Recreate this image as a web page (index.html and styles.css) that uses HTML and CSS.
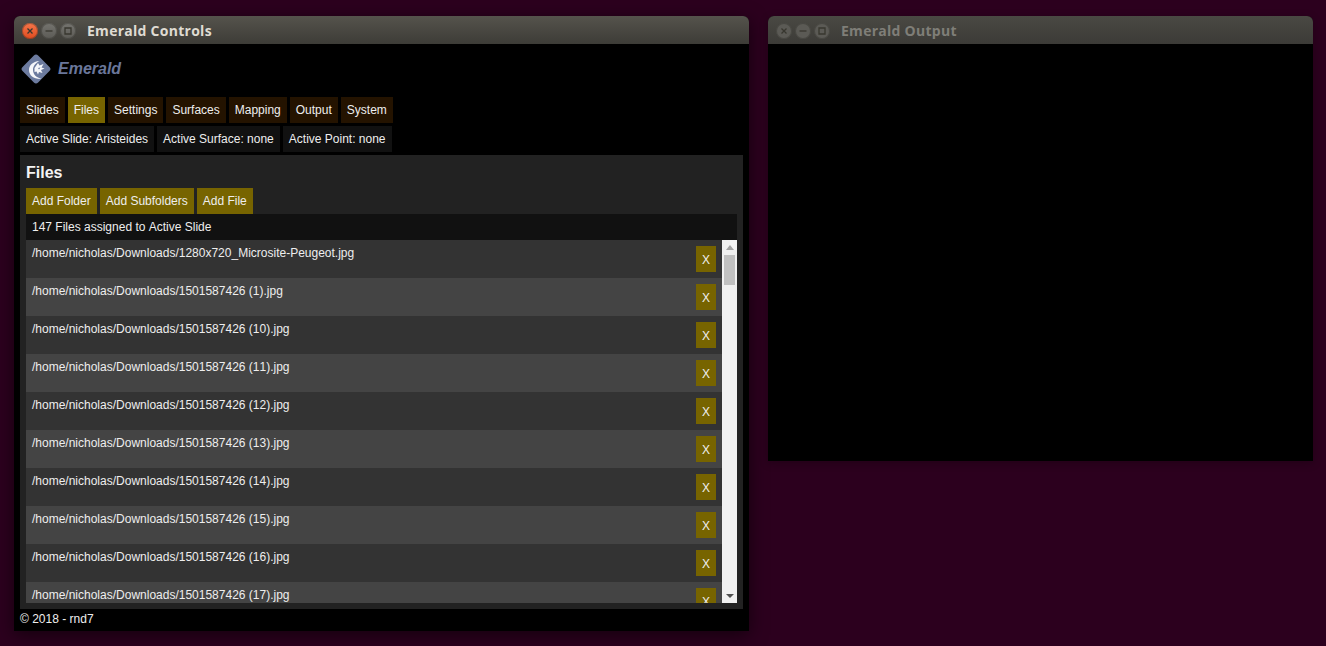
FILE: index.html
```html
<!DOCTYPE html>
<html lang="en">
<head>
<meta charset="utf-8">
<title>Emerald</title>
<link rel="stylesheet" href="styles.css">
</head>
<body>
<section class="window window-controls">
  <header class="titlebar">
    <div class="wm-buttons">
      <span class="wm wm-close"><svg viewBox="0 0 16 16"><path d="M5.5 5.5l5 5M10.5 5.5l-5 5"/></svg></span>
      <span class="wm"><svg viewBox="0 0 16 16"><path d="M4.5 8h7"/></svg></span>
      <span class="wm"><svg viewBox="0 0 16 16"><path d="M5 5h6v6H5z"/></svg></span>
    </div>
    <h1 class="wm-title">Emerald Controls</h1>
  </header>
  <div class="app">
    <div class="brand">
      <svg class="logo" viewBox="0 0 30 30">
        <rect x="4" y="4" width="22" height="22" rx="3" transform="rotate(45 15 15)" fill="#6c7b9f"/>
        <path d="M18.500 7C11.500 7.500 8 11.500 8 16c0 5.500 5 9.500 12.500 9-5-1.500-8.500-4.500-8.500-9 0-4 2.500-7 6.500-9z" fill="#f6f7fa"/>
        <path d="M13.500 14l3.500-5 1.500 2.500 4-1.500-2 3.500 3 1-3.500 1.500 1.500 3-3.500-1-1 2.500-1.500-3-2 .5z" fill="#f6f7fa"/>
        <path d="M17 14l2.500-.5-1.500 2z" fill="#6c7b9f"/>
      </svg>
      <span class="brand-name">Emerald</span>
    </div>
    <nav class="tabs">
      <a class="tab">Slides</a><a class="tab tab-active">Files</a><a class="tab">Settings</a><a class="tab">Surfaces</a><a class="tab">Mapping</a><a class="tab">Output</a><a class="tab">System</a>
    </nav>
    <div class="status">
      <span class="status-item">Active Slide: Aristeides</span><span class="status-item">Active Surface: none</span><span class="status-item">Active Point: none</span>
    </div>
    <main class="panel">
      <h2 class="panel-title">Files</h2>
      <div class="actions">
        <button class="btn">Add Folder</button><button class="btn">Add Subfolders</button><button class="btn">Add File</button>
      </div>
      <div class="count">147 Files assigned to Active Slide</div>
      <div class="list-wrap">
        <ul class="file-list">
          <li class="file"><span>/home/nicholas/Downloads/1280x720_Microsite-Peugeot.jpg</span><button class="btn btn-x">X</button></li>
          <li class="file"><span>/home/nicholas/Downloads/1501587426 (1).jpg</span><button class="btn btn-x">X</button></li>
          <li class="file"><span>/home/nicholas/Downloads/1501587426 (10).jpg</span><button class="btn btn-x">X</button></li>
          <li class="file"><span>/home/nicholas/Downloads/1501587426 (11).jpg</span><button class="btn btn-x">X</button></li>
          <li class="file"><span>/home/nicholas/Downloads/1501587426 (12).jpg</span><button class="btn btn-x">X</button></li>
          <li class="file"><span>/home/nicholas/Downloads/1501587426 (13).jpg</span><button class="btn btn-x">X</button></li>
          <li class="file"><span>/home/nicholas/Downloads/1501587426 (14).jpg</span><button class="btn btn-x">X</button></li>
          <li class="file"><span>/home/nicholas/Downloads/1501587426 (15).jpg</span><button class="btn btn-x">X</button></li>
          <li class="file"><span>/home/nicholas/Downloads/1501587426 (16).jpg</span><button class="btn btn-x">X</button></li>
          <li class="file"><span>/home/nicholas/Downloads/1501587426 (17).jpg</span><button class="btn btn-x">X</button></li>
        </ul>
        <div class="scrollbar">
          <span class="arrow arrow-up"></span>
          <span class="thumb"></span>
          <span class="arrow arrow-down"></span>
        </div>
      </div>
    </main>
    <footer class="footer">© 2018 - rnd7</footer>
  </div>
</section>
<section class="window window-output">
  <header class="titlebar titlebar-dim">
    <div class="wm-buttons">
      <span class="wm"><svg viewBox="0 0 16 16"><path d="M5.5 5.5l5 5M10.5 5.5l-5 5"/></svg></span>
      <span class="wm"><svg viewBox="0 0 16 16"><path d="M4.5 8h7"/></svg></span>
      <span class="wm"><svg viewBox="0 0 16 16"><path d="M5 5h6v6H5z"/></svg></span>
    </div>
    <h1 class="wm-title">Emerald Output</h1>
  </header>
  <div class="output-canvas"></div>
</section>
</body>
</html>
```
FILE: styles.css
```css
* { box-sizing: border-box; }
html, body { height: 100%; margin: 0; }
body {
  background: #2c001e;
  font-family: "Liberation Sans", Arial, sans-serif;
  font-size: 12px;
  line-height: 14px;
  font-kerning: none;
  color: #eee;
  overflow: hidden;
  position: relative;
}
.window {
  position: absolute;
  top: 16px;
  display: flex;
  flex-direction: column;
  background: #000;
  border-radius: 6px 6px 0 0;
}
.window-controls {
  left: 14px;
  width: 735px;
  height: 615px;
  box-shadow: 0 4px 18px rgba(0, 0, 0, .55);
}
.window-output {
  left: 768px;
  width: 545px;
  height: 445px;
  box-shadow: 0 2px 8px rgba(0, 0, 0, .25);
}
.titlebar {
  flex: none;
  height: 28px;
  display: flex;
  align-items: center;
  padding: 1px 0 0 8px;
  border-radius: 6px 6px 0 0;
  background: linear-gradient(#55534c, #3d3c37);
}
.titlebar-dim { background: linear-gradient(#4a4943, #3c3b37); }
.wm-buttons { display: flex; gap: 3px; }
.wm {
  width: 16px;
  height: 16px;
  border-radius: 50%;
  background: linear-gradient(#75746f, #5b5a55);
  box-shadow: inset 0 0 0 1px rgba(40, 40, 35, .35);
  display: block;
}
.wm svg { display: block; width: 16px; height: 16px; fill: none; stroke: #38372f; stroke-width: 1.3; }
.wm-close { background: linear-gradient(#f5764a, #df4b1f); }
.wm-title {
  margin: 0 0 0 11px;
  font-family: "Open Sans", "Noto Sans", sans-serif;
  font-size: 14px;
  font-weight: 700;
  letter-spacing: .27px;
  line-height: 28px;
  color: #dfdbd2;
}
.titlebar-dim .wm { background: #5b5a55; }
.titlebar-dim .wm-title { color: #7f7e78; }
.app {
  flex: 1;
  display: flex;
  flex-direction: column;
  padding: 0 6px;
  min-height: 0;
}
.brand {
  height: 53px;
  display: flex;
  align-items: flex-start;
  padding: 10px 0 0 1px;
  gap: 7px;
}
.logo { width: 30px; height: 30px; display: block; }
.brand-name {
  font-size: 16px;
  font-weight: 700;
  font-style: italic;
  line-height: 30px;
  color: #6a779a;
}
.tabs, .status, .actions { display: flex; gap: 3px; }
.tab {
  padding: 6px;
  background: #241300;
}
.tab-active { background: #776400; }
.status { margin-top: 3px; }
.status-item { padding: 6px; background: #111; }
.panel {
  flex: none;
  height: 454px;
  margin-top: 3px;
  padding: 6px;
  background: #222;
  display: flex;
  flex-direction: column;
}
.panel-title {
  margin: 2px 0 5px;
  font-size: 16px;
  font-weight: 700;
  line-height: 20px;
  color: #f4f4f4;
}
.btn {
  border: 0;
  margin: 0;
  padding: 6px;
  font: inherit;
  font-kerning: none;
  color: inherit;
  background: #776400;
}
.count { padding: 6px; background: #111; }
.list-wrap { flex: 1; min-height: 0; display: flex; overflow: hidden; }
.file-list {
  flex: 1;
  margin: 0;
  padding: 0;
  list-style: none;
  overflow: hidden;
}
.file {
  height: 38px;
  display: flex;
  justify-content: space-between;
  padding: 6px;
  background: #333;
}
.file:nth-child(even) { background: #444; }
.btn-x { width: 20px; height: 26px; padding-top: 7px; }
.scrollbar {
  flex: none;
  width: 15px;
  background: #f1f1f1;
  display: flex;
  flex-direction: column;
  align-items: center;
}
.thumb {
  width: 11px;
  height: 30px;
  margin-top: 5px;
  background: #c1c1c1;
}
.arrow { width: 0; height: 0; border-left: 4px solid transparent; border-right: 4px solid transparent; }
.arrow-up { margin-top: 5px; border-bottom: 5px solid #a3a3a3; }
.arrow-down { margin-top: auto; margin-bottom: 5px; border-top: 4px solid #505050; }
.footer { height: 22px; padding-top: 3px; }
.output-canvas { flex: 1; background: #000; }
```
